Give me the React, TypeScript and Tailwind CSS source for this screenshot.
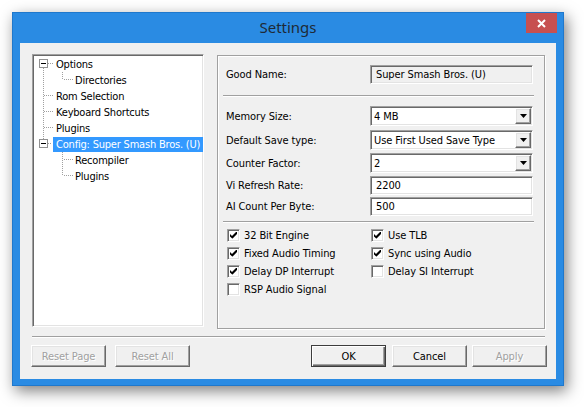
import React from "react";

const sunken =
  "border border-t-[#a0a0a0] border-l-[#a0a0a0] border-r-white border-b-white shadow-[inset_1px_1px_0_#696969,inset_-1px_-1px_0_#e3e3e3]";
const raised =
  "border border-t-white border-l-white border-r-[#696969] border-b-[#696969] shadow-[inset_-1px_-1px_0_#a0a0a0,inset_1px_1px_0_#e3e3e3]";

type Gut = "options" | "dir" | "leaf" | "config" | "childMid" | "childLast";

function Dots({ x1, y1, x2, y2 }: { x1: number; y1: number; x2: number; y2: number }) {
  return (
    <line
      x1={x1}
      y1={y1}
      x2={x2}
      y2={y2}
      stroke="#a0a0a0"
      strokeDasharray="1 1"
      shapeRendering="crispEdges"
    />
  );
}

function MinusBox() {
  return (
    <g shapeRendering="crispEdges">
      <rect x={5.5} y={3.5} width={8} height={8} fill="#fff" stroke="#919191" />
      <line x1={7} y1={7.5} x2={12} y2={7.5} stroke="#000" />
    </g>
  );
}

function Gutter({ kind }: { kind: Gut }) {
  const w = kind === "config" ? 19 : kind === "options" || kind === "leaf" ? 22 : 41;
  return (
    <svg width={w} height={16} className="shrink-0">
      {kind === "options" && (
        <>
          <MinusBox />
          <Dots x1={9.5} y1={12} x2={9.5} y2={16} />
          <Dots x1={14} y1={7.5} x2={20} y2={7.5} />
        </>
      )}
      {kind === "dir" && (
        <>
          <Dots x1={9.5} y1={0} x2={9.5} y2={16} />
          <Dots x1={28.5} y1={0} x2={28.5} y2={8} />
          <Dots x1={30} y1={7.5} x2={40} y2={7.5} />
        </>
      )}
      {kind === "leaf" && (
        <>
          <Dots x1={9.5} y1={0} x2={9.5} y2={16} />
          <Dots x1={10} y1={7.5} x2={20} y2={7.5} />
        </>
      )}
      {kind === "config" && (
        <>
          <Dots x1={9.5} y1={0} x2={9.5} y2={3} />
          <MinusBox />
          <Dots x1={14} y1={7.5} x2={18} y2={7.5} />
        </>
      )}
      {kind === "childMid" && (
        <>
          <Dots x1={28.5} y1={0} x2={28.5} y2={16} />
          <Dots x1={30} y1={7.5} x2={40} y2={7.5} />
        </>
      )}
      {kind === "childLast" && (
        <>
          <Dots x1={28.5} y1={0} x2={28.5} y2={8} />
          <Dots x1={30} y1={7.5} x2={40} y2={7.5} />
        </>
      )}
    </svg>
  );
}

const treeRows: { label: string; kind: Gut; selected?: boolean }[] = [
  { label: "Options", kind: "options" },
  { label: "Directories", kind: "dir" },
  { label: "Rom Selection", kind: "leaf" },
  { label: "Keyboard Shortcuts", kind: "leaf" },
  { label: "Plugins", kind: "leaf" },
  { label: "Config: Super Smash Bros. (U)", kind: "config", selected: true },
  { label: "Recompiler", kind: "childMid" },
  { label: "Plugins", kind: "childLast" },
];

function Separator() {
  return <div className="h-0 border-t border-b border-t-[#a0a0a0] border-b-white" />;
}

function Combo({ value }: { value: string }) {
  return (
    <div className={`flex h-[20px] items-center bg-white ${sunken}`}>
      <span className="whitespace-nowrap pl-[3px] pt-[2px]">{value}</span>
      <span
        className={`ml-auto mr-[1px] flex h-[16px] w-[16px] shrink-0 items-center justify-center bg-[#f0f0f0] ${raised}`}
      >
        <svg width="7" height="4" viewBox="0 0 7 4">
          <path d="M0 0h7L3.5 4z" fill="#000" />
        </svg>
      </span>
    </div>
  );
}

function Edit({ value, gray }: { value: string; gray?: boolean }) {
  return (
    <div
      className={`flex h-[19px] items-center whitespace-nowrap pl-[5px] pt-[2px] ${gray ? "bg-[#f0f0f0]" : "bg-white"} ${sunken}`}
    >
      {value}
    </div>
  );
}

function Field({
  label,
  className,
  children,
}: {
  label: string;
  className?: string;
  children: React.ReactNode;
}) {
  return (
    <div className={`flex items-center ${className ?? ""}`}>
      <div className="w-[144px] shrink-0 whitespace-nowrap pt-[2px]">{label}</div>
      <div className="flex-1">{children}</div>
    </div>
  );
}

function Check({ label, checked }: { label: string; checked?: boolean }) {
  return (
    <div className="flex h-[18px] items-center">
      <span
        className={`flex h-[13px] w-[13px] shrink-0 items-center justify-center bg-white ${sunken}`}
      >
        {checked && (
          <svg width="7" height="7" viewBox="0 0 7 7">
            <path d="M0 2L2 4L6 0H7V2L2.6 6.6H2.2L0 4.4Z" fill="#000" />
          </svg>
        )}
      </span>
      <span className="ml-[4px] whitespace-nowrap pt-[2px]">{label}</span>
    </div>
  );
}

function Button({
  label,
  disabled,
  primary,
  className,
}: {
  label: string;
  disabled?: boolean;
  primary?: boolean;
  className?: string;
}) {
  const frame = primary
    ? "border border-[#3c3c3c] shadow-[inset_1px_1px_0_#fff,inset_-1px_-1px_0_#696969,inset_-2px_-2px_0_#a0a0a0]"
    : raised;
  return (
    <button
      type="button"
      className={`flex h-[22px] w-[75px] items-center justify-center bg-[#f0f0f0] pt-[2px] ${frame} ${
        disabled ? "text-[#a0a0a0] [text-shadow:1px_1px_0_#fff]" : "text-black"
      } ${className ?? ""}`}
    >
      {label}
    </button>
  );
}

export default function App() {
  return (
    <div className="h-[407px] w-[584px] bg-white pl-[12px] pt-[12px] font-['DejaVu_Sans_Condensed','Liberation_Sans',sans-serif] text-[11px] tracking-[-0.1px] text-black">
      <div className="flex h-[374px] w-[552px] flex-col border border-[#1f78cc] bg-[#2a8be3] shadow-[3px_5px_14px_rgba(0,0,0,0.5)]">
        {/* Title bar */}
        <div className="grid h-[30px] grid-cols-[1fr_auto_1fr]">
          <div />
          <div className="flex items-center pb-[1px] font-['Noto_Sans','Open_Sans',sans-serif] text-[15px] tracking-normal text-[#1e2a36]">
            Settings
          </div>
          <div className="flex items-start justify-end pr-[6px]">
            <div className="flex h-[20px] w-[31px] items-center justify-center bg-[#c75050]">
              <svg width="9" height="9" viewBox="0 0 9 9">
                <path d="M1 1l7 7M8 1l-7 7" stroke="#fff" strokeWidth="2" />
              </svg>
            </div>
          </div>
        </div>

        {/* Client area */}
        <div className="mx-[7px] mb-[6px] flex flex-1 flex-col bg-[#f0f0f0] pl-[12px] pr-[11px] pt-[11px]">
          <div className="flex">
            {/* Tree */}
            <div className={`h-[273px] w-[172px] overflow-hidden bg-white pl-[1px] pt-[1px] tracking-[-0.2px] ${sunken}`}>
              {treeRows.map((r, i) => (
                <div key={i} className="flex h-[16px] items-center whitespace-nowrap">
                  <Gutter kind={r.kind} />
                  {r.selected ? (
                    <span className="flex h-[15px] items-center bg-[#3399ff] pl-[3px] pr-[3px] pt-[2px] text-white">
                      {r.label}
                    </span>
                  ) : (
                    <span className="pt-[2px]">{r.label}</span>
                  )}
                </div>
              ))}
            </div>

            {/* Config panel */}
            <div className="ml-[13px] mt-[1px] h-[274px] flex-1 border border-[#a0a0a0] shadow-[inset_1px_1px_0_#fff,1px_1px_0_#fff]">
              <div className="pl-[8px] pr-[11px] pt-[9px]">
                <Field label="Good Name:">
                  <Edit value="Super Smash Bros. (U)" gray />
                </Field>
              </div>
              <div className="ml-[5px] mr-[10px] mt-[11px]">
                <Separator />
              </div>
              <div className="pl-[8px] pr-[11px]">
                <Field label="Memory Size:" className="mt-[9px]">
                  <Combo value="4 MB" />
                </Field>
                <Field label="Default Save type:" className="mt-[4px]">
                  <Combo value="Use First Used Save Type" />
                </Field>
                <Field label="Counter Factor:" className="mt-[3px]">
                  <Combo value="2" />
                </Field>
                <Field label="Vi Refresh Rate:" className="mt-[3px]">
                  <Edit value="2200" />
                </Field>
                <Field label="AI Count Per Byte:" className="mt-[2px]">
                  <Edit value="500" />
                </Field>
              </div>
              <div className="ml-[5px] mr-[10px] mt-[5px]">
                <Separator />
              </div>
              <div className="mt-[3px] grid grid-cols-[144px_1fr] pl-[9px]">
                <Check label="32 Bit Engine" checked />
                <Check label="Use TLB" checked />
                <Check label="Fixed Audio Timing" checked />
                <Check label="Sync using Audio" checked />
                <Check label="Delay DP Interrupt" checked />
                <Check label="Delay SI Interrupt" />
                <Check label="RSP Audio Signal" />
              </div>
            </div>
          </div>

          <div className="mt-[7px]">
            <Separator />
          </div>

          <div className="mr-[-2px] mt-[7px] flex">
            <Button label="Reset Page" disabled className="ml-[-1px]" />
            <Button label="Reset All" disabled className="ml-[9px]" />
            <Button label="OK" primary className="ml-auto" />
            <Button label="Cancel" className="ml-[6px]" />
            <Button label="Apply" disabled className="ml-[5px]" />
          </div>
        </div>
      </div>
    </div>
  );
}
